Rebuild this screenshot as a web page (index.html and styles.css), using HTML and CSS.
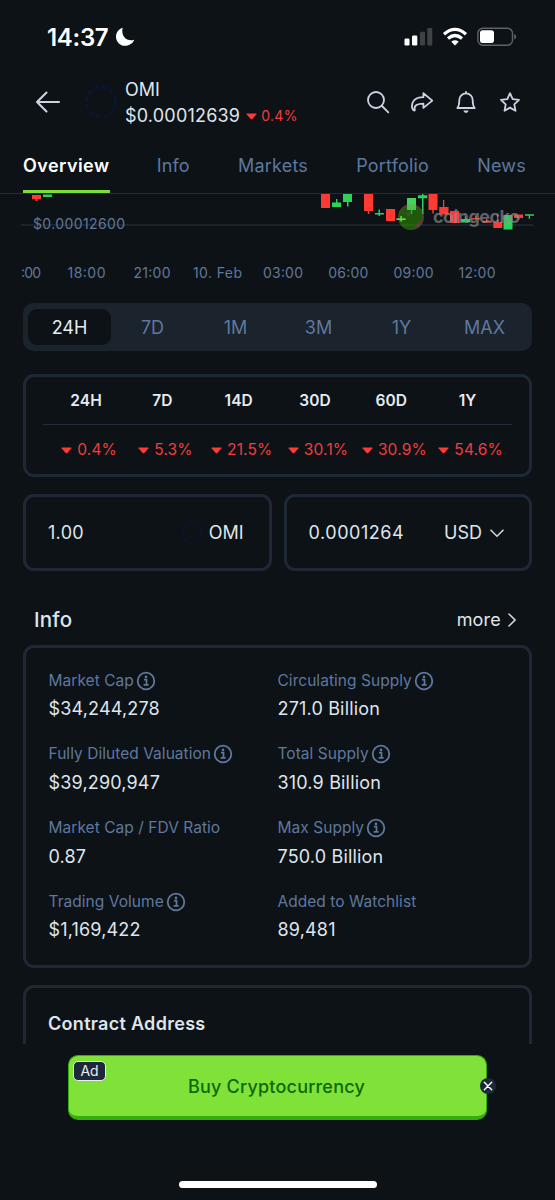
FILE: index.html
```html
<!DOCTYPE html>
<html lang="en">
<head>
<meta charset="utf-8">
<title>OMI</title>
<link rel="stylesheet" href="styles.css">
</head>
<body>
<svg class="defs" width="0" height="0">
  <symbol id="info" viewBox="0 0 20 20"><circle cx="10" cy="10" r="8.3" fill="none" stroke="currentColor" stroke-width="1.8"/><path d="M8 8.6h2.5v5M7.6 13.8h5" fill="none" stroke="currentColor" stroke-width="1.7"/><circle cx="10" cy="5.9" r="1.3" fill="currentColor"/></symbol>
  <symbol id="down" viewBox="0 0 11 7"><path d="M1 .5h9q.9 0 .4.8L6.4 5.900q-.9.9-1.800 0L.6 1.300Q.1.500 1 .500z" fill="currentColor"/></symbol>
  <symbol id="coin" viewBox="0 0 34 34"><circle cx="17" cy="17" r="14.8" fill="none" stroke="#0b1530" stroke-width="3.2" stroke-dasharray="5.4 2.35"/></symbol>
</svg>
<div class="screen">
  <header class="status">
    <span class="clock">14:37</span>
    <svg class="moon" width="20" height="20" viewBox="0 0 20 20"><path d="M7.6.8C4 2 1 5.400 1 9.700 1 14.800 5 18.800 10.200 18.800c4 0 7.700-2.400 9.100-6-6.500 2.300-13.700-2.600-11.700-12z" fill="#fff"/></svg>
    <svg class="signals" width="114" height="20" viewBox="0 0 114 20">
      <rect x="0.500" y="11.500" width="5" height="7" rx="1.300" fill="#fff"/><rect x="8" y="8.500" width="5.300" height="10" rx="1.300" fill="#fff"/><rect x="16" y="4.800" width="5" height="13.700" rx="1.300" fill="#3e4246"/><rect x="23.300" y="1" width="5" height="17.500" rx="1.300" fill="#3e4246"/>
      <g fill="none" stroke="#fff" stroke-width="3.200"><path d="M40 7.200q11-9.600 22 0"/><path d="M44 11.500q7-6 14 0"/></g><path d="M47.300 14.800q3.700-2.900 7.400 0L51 18.600z" fill="#fff"/>
      <rect x="73.900" y="1.200" width="34.600" height="17" rx="5" fill="none" stroke="#5f6367" stroke-width="1.400"/><rect x="76" y="3.300" width="14" height="12.800" rx="2.800" fill="#fff"/><path d="M110.200 7q2 .7 2 2.700t-2 2.700z" fill="#5f6367"/>
    </svg>
  </header>
  <div class="coin-header">
    <svg class="back" width="26" height="24" viewBox="0 0 26 24"><path d="M24 12H2M11.500 2.500L2 12l9.500 9.500" fill="none" stroke="#cbd5e1" stroke-width="2.100" stroke-linecap="round" stroke-linejoin="round"/></svg>
    <svg class="coin-logo" width="34" height="34"><use href="#coin"/></svg>
    <div class="coin-title">
      <div class="symbol">OMI</div>
      <div class="price"><span class="quote">$0.00012639</span><svg width="11" height="7"><use href="#down"/></svg><span class="drop">0.4%</span></div>
    </div>
    <div class="actions">
      <svg width="24" height="24" viewBox="0 0 24 24"><circle cx="10" cy="10" r="8" /><path d="M16 16l6.300 6.300"/></svg>
      <svg width="24" height="24" viewBox="0 0 24 24"><path d="M13.400 3.200v4C5.500 7.200 1.500 11 2 17.500q.4 2 2 3 1.100.5.700-.900C3.700 15.500 7.500 13.600 13.400 13.600v4.300l8.900-7.300z"/></svg>
      <svg width="24" height="24" viewBox="0 0 24 24"><path d="M3.300 18c1.600-1.800 2-3.500 2-8a6.700 6.700 0 0 1 13.400 0c0 4.500.4 6.200 2 8zM12 3.300V1.800"/><path d="M9.300 20.600h5.400q-.7 2.400-2.700 2.400t-2.700-2.400z" fill="#cbd5e1" stroke="none"/></svg>
      <svg width="24" height="24" viewBox="0 0 24 24"><path d="M12 3.200l2.700 5.900 6.300.8-4.700 4.400 1.200 6.500-5.500-3.200-5.500 3.200 1.200-6.500L3 9.900l6.300-.8z"/></svg>
    </div>
  </div>
  <nav class="tabs"><span class="tab current">Overview</span><span class="tab">Info</span><span class="tab">Markets</span><span class="tab">Portfolio</span><span class="tab">News</span></nav>
  <svg class="chart" width="555" height="109" viewBox="0 194 555 109">
    <path d="M21 225H533" stroke="#202a36" stroke-width="1.500"/>
    <g fill="#ff3a33"><path d="M32 195h9v4.300h-3.500V201h-2v-1.700H32zM321 194h9v14h-9zM364 194h9v17h-3.700v3h-1.500v-3H364zM386 209h9v12h-9zM428.500 194h9v16h-3.700v3.500h-1.500V210h-3.800zM443 200h1.300v7h4.200v7.500h-9.300V207h3.800zM450 211h9v12h-9zM475 216h1.200v2h4.300v1.600h-9V218h3.500zM486 218.800h1.300v2h4.200v2h-9v-2h3.500zM497 213.500h1.300v8.500h4v6h-9v-6h3.700zM514 214.500h9v3.500h-3.500v1.500H518V218h-4z"/></g>
    <g fill="#2fd158"><path d="M43 194.400h9v2.500h-9zM336 199h1.400v3.500h3.600v4.500h-9v-4.500h4zM343 194h9v8h-3.500v4.500h-1.500V202h-4zM378.500 209.500h1.400v3.500h4v1.500h-4v1.500h-1.400v-1.500H375V213h3.500zM400.500 216h1.300v2.600h3.700v1.500h-3.700v1.500h-1.300v-1.500h-4v-1.500h4zM407 198h9v12h-3.700v4h-1.500v-4H407zM422 194h1.500v1.300h3.800v3h-3.800V214H422v-15.700h-4v-3h4zM464.800 216.500h1.300v2.500h4v3.500h-9V219h3.700zM503.500 215h9v14.500h-9zM525 214.200h9v1.500h-4v3h-1.300v-3H525z"/></g>
    <g opacity=".55"><circle cx="411" cy="217" r="13" fill="#8c6648"/><path d="M411 230c-7 0-12-5-12-12 0-7 4-11 11-11.500 8 0 12.500 4 12.500 8.500 0 5-4 6-6 9-1.500 2-1.500 5-5.500 6z" fill="#2c9600"/><circle cx="408.500" cy="214" r="2" fill="#777"/></g>
    <path d="M407 198h9v12h-9z" fill="#55d45c" opacity=".65"/><path d="M396.500 218.600h9v1.500h-9zM400.500 216h1.300v5.600h-1.300z" fill="#6bd93f"/>
    <text x="433" y="222.500" class="watermark" textLength="87">coingecko</text>
    <text x="33" y="229" class="axis" textLength="92">$0.00012600</text>
    <g class="axis"><text x="21" y="278" textLength="20">:00</text><text x="67.500" y="278" textLength="38">18:00</text><text x="133.500" y="278" textLength="37">21:00</text><text x="193" y="278" textLength="49">10. Feb</text><text x="263" y="278" textLength="40">03:00</text><text x="328.300" y="278" textLength="40">06:00</text><text x="393.500" y="278" textLength="40">09:00</text><text x="458.500" y="278" textLength="37">12:00</text></g>
  </svg>
  <main class="content">
    <div class="ranges"><span class="range chosen">24H</span><span class="range">7D</span><span class="range">1M</span><span class="range">3M</span><span class="range">1Y</span><span class="range">MAX</span></div>
    <section class="card changes">
      <div class="periods"><span>24H</span><span>7D</span><span>14D</span><span>30D</span><span>60D</span><span>1Y</span></div>
      <div class="deltas">
        <span><svg width="11" height="7"><use href="#down"/></svg>0.4%</span><span><svg width="11" height="7"><use href="#down"/></svg>5.3%</span><span><svg width="11" height="7"><use href="#down"/></svg>21.5%</span><span><svg width="11" height="7"><use href="#down"/></svg>30.1%</span><span><svg width="11" height="7"><use href="#down"/></svg>30.9%</span><span><svg width="11" height="7"><use href="#down"/></svg>54.6%</span>
      </div>
    </section>
    <div class="converter">
      <div class="card amount"><span class="entry">1.00</span><span class="unit"><svg width="22" height="22"><use href="#coin"/></svg>OMI</span></div>
      <div class="card amount"><span class="entry fiat">0.0001264</span><span class="unit usd">USD<svg width="14" height="9" viewBox="0 0 14 9"><path d="M1 1.200l6 6 6-6" fill="none" stroke="#cbd5e1" stroke-width="1.600" stroke-linecap="round"/></svg></span></div>
    </div>
    <div class="section-head"><h2>Info</h2><span class="more">more<svg width="8" height="14" viewBox="0 0 8 14"><path d="M1 1l6 6-6 6" fill="none" stroke="#cbd5e1" stroke-width="1.600" stroke-linecap="round"/></svg></span></div>
    <section class="card facts">
      <div class="fact"><span class="label">Market Cap<svg width="20" height="20"><use href="#info"/></svg></span><span class="value">$34,244,278</span></div>
      <div class="fact"><span class="label">Circulating Supply<svg width="20" height="20"><use href="#info"/></svg></span><span class="value">271.0 Billion</span></div>
      <div class="fact"><span class="label">Fully Diluted Valuation<svg width="20" height="20"><use href="#info"/></svg></span><span class="value">$39,290,947</span></div>
      <div class="fact"><span class="label">Total Supply<svg width="20" height="20"><use href="#info"/></svg></span><span class="value">310.9 Billion</span></div>
      <div class="fact"><span class="label">Market Cap / FDV Ratio</span><span class="value">0.87</span></div>
      <div class="fact"><span class="label">Max Supply<svg width="20" height="20"><use href="#info"/></svg></span><span class="value">750.0 Billion</span></div>
      <div class="fact"><span class="label">Trading Volume<svg width="20" height="20"><use href="#info"/></svg></span><span class="value">$1,169,422</span></div>
      <div class="fact"><span class="label">Added to Watchlist</span><span class="value">89,481</span></div>
    </section>
    <section class="card contract"><h3>Contract Address</h3></section>
  </main>
  <footer class="bottom">
    <div class="banner"><span class="ad">Ad</span><span class="cta">Buy Cryptocurrency</span>
      <svg class="close" width="16" height="16" viewBox="0 0 16 16"><circle cx="8" cy="8" r="8" fill="#1d283a"/><path d="M4.300 4.300l7.400 7.400M11.700 4.300l-7.400 7.400" stroke="#fff" stroke-width="1.400" stroke-linecap="round"/></svg>
    </div>
    <div class="home"></div>
  </footer>
</div>
</body>
</html>
```
FILE: styles.css
```css
* { box-sizing: border-box; }
body { margin: 0; background: #0d1217; color: #dfe5ec; font-family: Inter, "Liberation Sans", sans-serif; font-size: 18px; line-height: 22px; }
svg { display: block; flex: none; }
.defs { position: absolute; }
h2, h3 { margin: 0; }
.screen { width: 555px; height: 1200px; overflow: hidden; display: flex; flex-direction: column; }
.status { height: 74px; display: flex; align-items: center; padding: 0 37px 0 47px; }
.clock { color: #fff; font-size: 24px; font-weight: 600; letter-spacing: -.3px; padding-top: 1px; }
.moon { margin-left: 7px; }
.signals { margin-left: auto; }
.coin-header { height: 66px; padding: 0 33px 10px 35px; display: flex; align-items: center; }
.coin-logo { margin-left: 23px; }
.coin-title { margin-left: 7px; line-height: 26px; padding-top: 2px; }
.quote { letter-spacing: .2px; }
.price { display: flex; align-items: center; }
.price svg { margin: 0 4px 0 6px; color: #ff3a33; }
.drop { font-size: 14px; color: #f03d3e; letter-spacing: .3px; }
.actions { margin-left: auto; display: flex; gap: 20px; fill: none; stroke: #cbd5e1; stroke-width: 1.8; stroke-linecap: round; stroke-linejoin: round; }
.tabs { height: 54px; padding: 0 29px 0 23px; border-bottom: 1px solid #222d3a; display: flex; justify-content: space-between; }
.tab { height: 53px; padding-top: 15px; color: #5f789e; letter-spacing: .2px; }
.current { color: #fff; font-weight: 600; letter-spacing: .45px; margin-right: -1px; border-bottom: 3px solid #7ddf35; }
.chart { font-family: Inter, sans-serif; }
.axis { font-size: 14px; fill: #60779a; }
.watermark { font-size: 18px; font-weight: 700; fill: #8b8e92; opacity: .65; }
.content { height: 741px; overflow: hidden; padding: 0 23px; display: flex; flex-direction: column; flex: none; }
.card { border: 3px solid #1f2936; border-radius: 11px; flex: none; }
.ranges { height: 48px; padding: 6px 6px 6px 5px; border-radius: 10px; background: #1b232c; display: grid; grid-template-columns: repeat(6, 1fr); flex: none; }
.range { display: flex; align-items: center; justify-content: center; padding-top: 1px; color: #5f789e; }
.chosen { background: #0d1217; color: #e5ebf2; border-radius: 9px; }
.changes { height: 103px; margin-top: 23px; padding: 0 17px; }
.periods, .deltas { display: grid; grid-template-columns: repeat(6, 76.3px); align-items: center; text-align: center; padding-left: 5px; }
.periods { height: 48px; border-bottom: 1px solid #222d3a; font-size: 15.5px; font-weight: 600; color: #e5ebf2; letter-spacing: .1px; }
.deltas { height: 50px; padding-left: 8px; font-size: 15.5px; color: #f03d3e; letter-spacing: .15px; }
.deltas span { display: flex; align-items: center; justify-content: center; gap: 5px; }
.deltas svg { color: #ff3a33; }
.converter { display: grid; grid-template-columns: 1fr 1fr; gap: 12px; margin-top: 17px; flex: none; }
.amount { height: 77px; padding: 0 24px 0 22px; display: flex; align-items: center; justify-content: space-between; }
.entry { letter-spacing: .3px; }
.fiat { letter-spacing: .55px; }
.unit { display: flex; align-items: center; gap: 6px; padding: 1px 1px 0 0; }
.usd { gap: 8px; }
.section-head { height: 74px; padding: 23px 16px 0 11px; display: flex; justify-content: space-between; align-items: flex-start; }
h2 { font-size: 20.5px; line-height: 51px; font-weight: 500; letter-spacing: .2px; }
.more { display: flex; align-items: center; gap: 7px; height: 51px; letter-spacing: .2px; }
.facts { height: 323px; padding: 19px 22.500px; display: grid; grid-template-columns: 229px 1fr; grid-auto-rows: 73.800px; align-content: start; }
.label { display: flex; align-items: center; gap: 2px; height: 27px; font-size: 15.5px; color: #5f789e; letter-spacing: .04px; }
.value { display: block; height: 30px; line-height: 30px; letter-spacing: .17px; }
.contract { height: 100px; margin-top: 17px; padding: 24px 22px; }
h3 { font-size: 18px; line-height: 23px; font-weight: 600; letter-spacing: .3px; }
.bottom { height: 156px; display: flex; flex-direction: column; align-items: center; padding-top: 11px; }
.banner { position: relative; width: 419px; height: 65px; border: 1px solid #35ad0b; border-bottom-width: 4px; border-radius: 10px; background: #80e239; display: flex; align-items: center; justify-content: center; flex: none; }
.cta { color: #0b6808; font-weight: 500; letter-spacing: .2px; padding: 2px 2px 0 0; }
.ad { position: absolute; left: 4px; top: 5px; width: 33px; height: 20px; border: 1px solid #e7edf4; border-radius: 5px; background: #1d283a; color: #e7edf4; font-size: 14px; line-height: 18px; text-align: center; }
.close { position: absolute; right: -10px; top: 22px; }
.home { width: 198px; height: 7px; margin-top: 61px; border-radius: 4px; background: #fff; }
```
